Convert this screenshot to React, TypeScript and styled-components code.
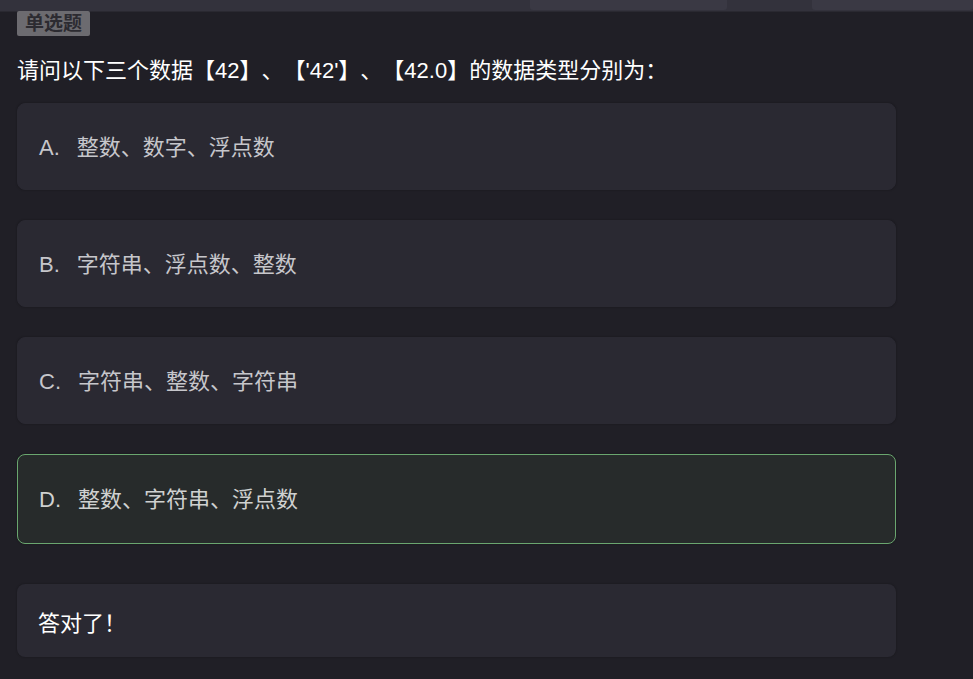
import React from 'react'
import styled, { createGlobalStyle } from 'styled-components'

const GlobalStyle = createGlobalStyle`
	html, body {
		margin: 0;
		padding: 0;
		background: #201f26;
	}
	body {
		font-family: 'Liberation Sans', 'Noto Sans CJK SC', sans-serif;
		color: #c9c9ce;
		text-spacing-trim: space-all;
	}
`

type TOption = {
	key: string
	text: string
}

const options: TOption[] = [
	{ key: 'A', text: '整数、数字、浮点数' },
	{ key: 'B', text: '字符串、浮点数、整数' },
	{ key: 'C', text: '字符串、整数、字符串' },
	{ key: 'D', text: '整数、字符串、浮点数' },
]

const correctKey = 'D'

const Page = styled.div`
	width: 973px;
	height: 679px;
	overflow: hidden;
	display: flex;
	flex-direction: column;
`

const TopBar = styled.div`
	height: 11px;
	flex-shrink: 0;
	background: #33323c;
	display: flex;
	border-bottom: 1px solid #2a2931;
`

const TabStub = styled.div<{ $width: number; $left: number }>`
	margin-left: ${p => p.$left}px;
	width: ${p => p.$width}px;
	height: 10px;
	background: #3a3944;
	border-bottom-left-radius: 3px;
	border-bottom-right-radius: 3px;
`

const Content = styled.div`
	padding: 0 77px 0 17px;
	display: flex;
	flex-direction: column;
`

const Tag = styled.div`
	align-self: flex-start;
	background: #6c6b70;
	color: #2c2b31;
	font-weight: bold;
	font-size: 19px;
	line-height: 25px;
	padding: 0 8px;
	border-radius: 2px;
	margin-top: -1px;
`

const Question = styled.div`
	margin-top: 20px;
	color: #ffffff;
	font-size: 22px;
	font-weight: 400;
	line-height: 30px;
`

const OptionList = styled.div`
	margin-top: 17px;
	display: flex;
	flex-direction: column;
	gap: 30px;
`

const OptionCard = styled.div<{ $correct?: boolean }>`
	height: ${p => (p.$correct ? 90 : 87)}px;
	box-sizing: border-box;
	display: flex;
	align-items: center;
	padding-left: 21px;
	padding-top: 2px;
	border-radius: 8px;
	font-size: 22px;
	background: ${p => (p.$correct ? '#272b2b' : '#2a2932')};
	border: 1px solid ${p => (p.$correct ? '#6aa66f' : '#2a2932')};
	box-shadow: 0 0 2px rgba(0, 0, 0, 0.35);
	color: ${p => (p.$correct ? '#cfd1d0' : '#c6c6cb')};
`

const OptionLine = styled.div`
	line-height: 30px;
	white-space: nowrap;
`

const OptionLabel = styled.span`
	display: inline-block;
	margin-right: 17px;
`

const Result = styled.div`
	margin-top: 40px;
	height: 73px;
	display: flex;
	align-items: center;
	padding-left: 21px;
	border-radius: 8px;
	background: #2a2932;
	box-shadow: 0 0 2px rgba(0, 0, 0, 0.35);
	color: #ffffff;
	font-size: 22px;
	font-weight: 400;
`

export default function App() {
	return (
		<Page>
			<GlobalStyle />
			<TopBar>
				<TabStub $left={530} $width={197} />
				<TabStub $left={85} $width={161} />
			</TopBar>
			<Content>
				<Tag>单选题</Tag>
				<Question>
					请问以下三个数据【42】、【'42'】、【42.0】的数据类型分别为：
				</Question>
				<OptionList>
					{options.map(opt => (
						<OptionCard key={opt.key} $correct={opt.key === correctKey}>
							<OptionLine>
								<OptionLabel>{opt.key}.</OptionLabel>
								{opt.text}
							</OptionLine>
						</OptionCard>
					))}
				</OptionList>
				<Result>答对了！</Result>
			</Content>
		</Page>
	)
}
